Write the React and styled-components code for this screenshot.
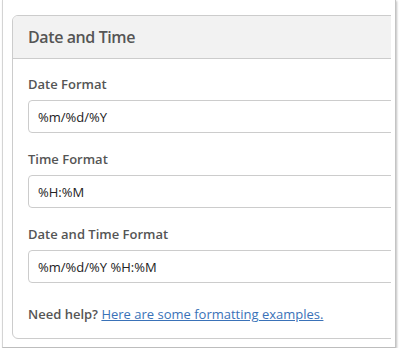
import React from "react";
import styled, { createGlobalStyle } from "styled-components";

const Global = createGlobalStyle`
  html, body { margin: 0; padding: 0; background: #ffffff; }
  body { font-family: "Open Sans", "Liberation Sans", sans-serif; }
`;

const Frame = styled.div`
  position: relative;
  margin-left: 2px;
  width: 394px;
  height: 348px;
  background: #ffffff;
  border-left: 1px solid #d4d4d4;
  border-right: 1px solid #c4c4c4;
  border-bottom: 1px solid #bdbdbd;
  box-shadow: 1px 1px 2px rgba(0, 0, 0, 0.25);
  box-sizing: border-box;
  padding-right: 4px;
`;

const Clip = styled.div`
  height: 100%;
  overflow: hidden;
  padding-top: 15px;
  padding-left: 9px;
  box-sizing: border-box;
`;

const Panel = styled.section`
  width: 420px;
  border: 1px solid #cccccc;
  border-radius: 6px;
  background: #ffffff;
  overflow: hidden;
`;

const PanelHeader = styled.header`
  height: 42px;
  display: flex;
  align-items: center;
  padding-left: 15px;
  background: #f2f2f2;
  border-bottom: 1px solid #cccccc;
`;

const Title = styled.h3`
  margin: 0;
  font-size: 16px;
  font-weight: 600;
  letter-spacing: -0.4px;
  color: #555555;
`;

const Body = styled.div`
  display: flex;
  flex-direction: column;
  gap: 17px;
  padding: 16px 15px 15px 15px;
`;

const Group = styled.div`
  display: flex;
  flex-direction: column;
  gap: 7px;
`;

const Label = styled.label`
  font-size: 13px;
  line-height: 18px;
  font-weight: 600;
  color: #555555;
`;

const Input = styled.input`
  height: 33px;
  box-sizing: border-box;
  border: 1px solid #cccccc;
  border-radius: 4px;
  padding: 0 9px;
  font-family: "Open Sans", "Liberation Sans", sans-serif;
  font-size: 13px;
  color: #222222;
  background: #ffffff;
  outline: none;
`;

const Help = styled.p`
  margin: 5px 0 0 0;
  font-size: 13px;
  line-height: 18px;
  font-weight: 600;
  color: #555555;
`;

const HelpLink = styled.a`
  font-weight: 400;
  color: #3a72b8;
  text-decoration: underline;
`;

export default function App() {
  return (
    <>
      <Global />
      <Frame>
        <Clip>
          <Panel>
            <PanelHeader>
              <Title>Date and Time</Title>
            </PanelHeader>
            <Body>
              <Group>
                <Label>Date Format</Label>
                <Input defaultValue="%m/%d/%Y" />
              </Group>
              <Group>
                <Label>Time Format</Label>
                <Input defaultValue="%H:%M" />
              </Group>
              <Group>
                <Label>Date and Time Format</Label>
                <Input defaultValue="%m/%d/%Y %H:%M" />
              </Group>
              <Help>
                Need help? <HelpLink href="#">Here are some formatting examples.</HelpLink>
              </Help>
            </Body>
          </Panel>
        </Clip>
      </Frame>
    </>
  );
}
